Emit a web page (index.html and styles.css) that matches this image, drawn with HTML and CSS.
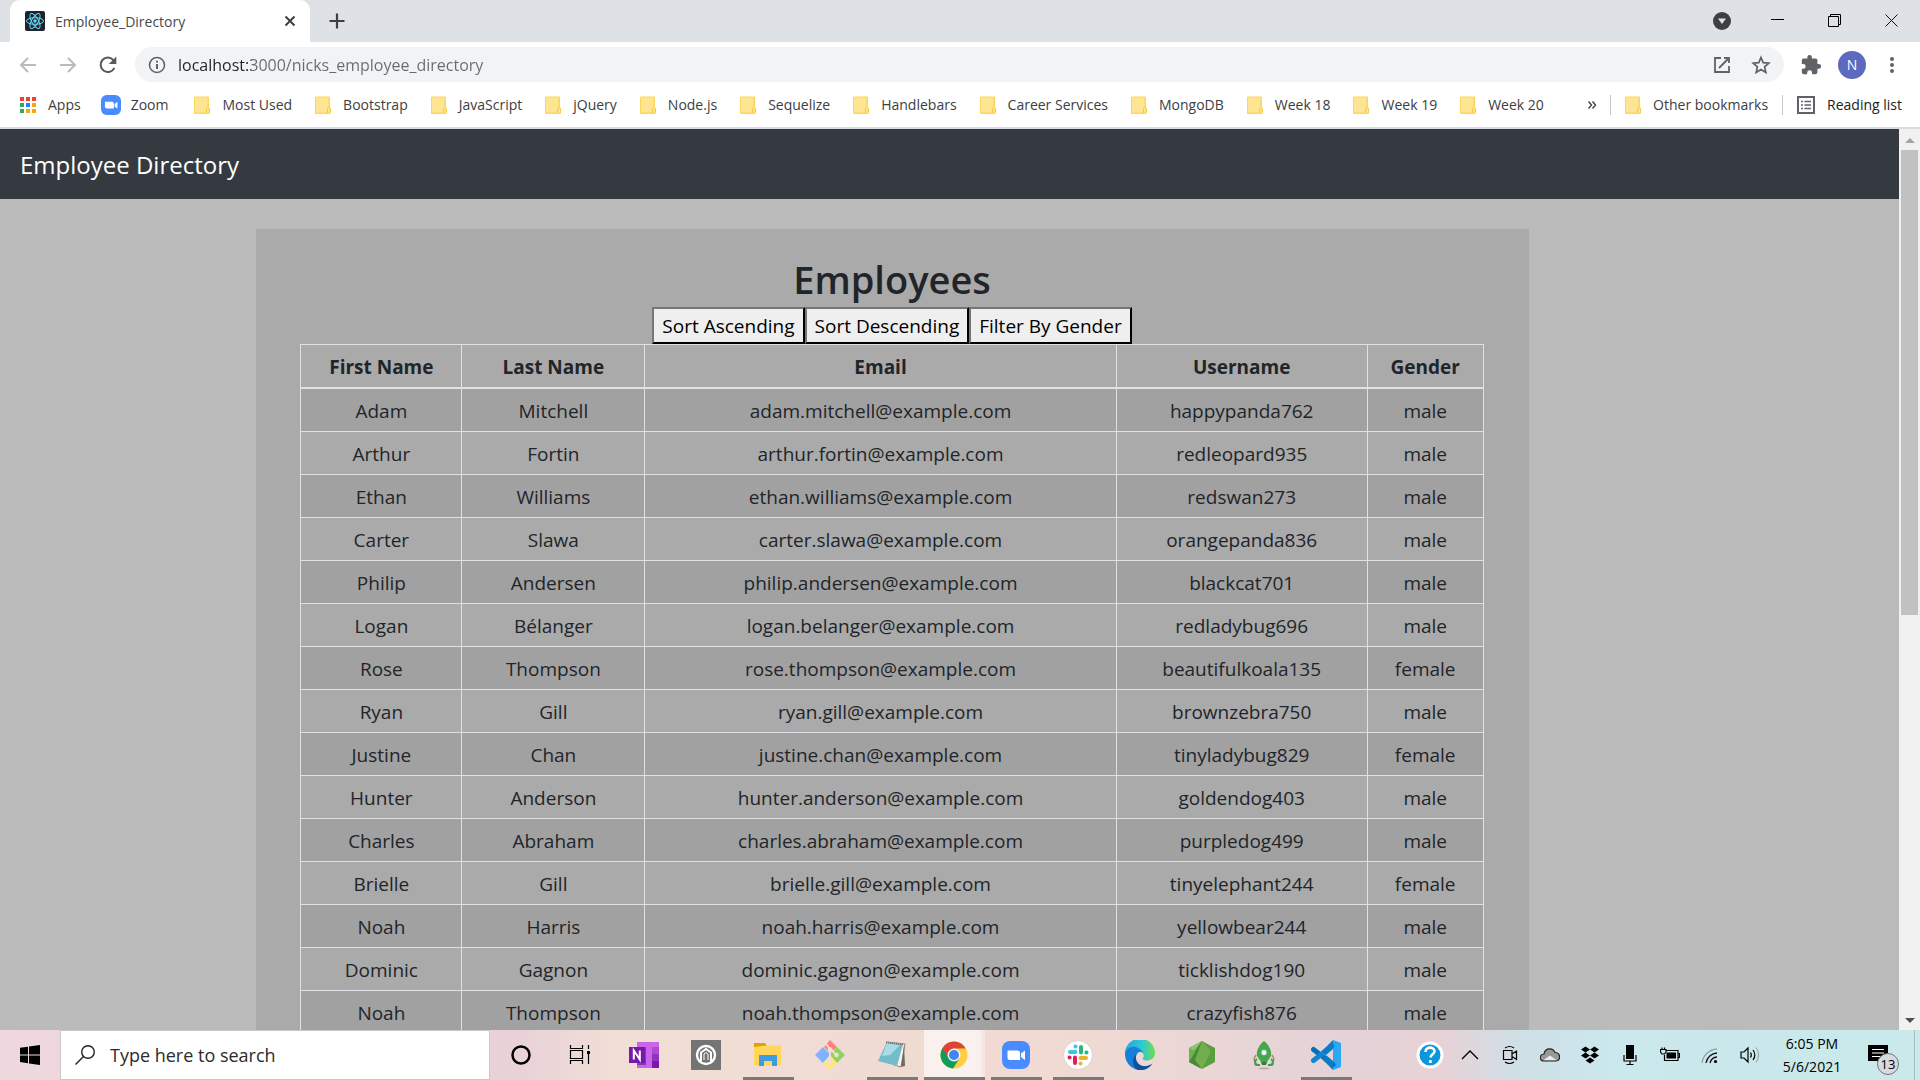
FILE: index.html
```html
<!DOCTYPE html>
<html lang="en">
<head>
<meta charset="utf-8">
<title>Employee_Directory</title>
<link rel="stylesheet" href="styles.css">
</head>
<body>
<svg class="sprite" aria-hidden="true">
  <symbol id="folder" viewBox="0 0 16 18">
    <path d="M1 .5h13a1 1 0 0 1 1 1V12l1 1v4l-1 1H1a1 1 0 0 1-1-1V1.500a1 1 0 0 1 1-1z" fill="#fbd75b"/>
    <path d="M1 1.500h12.500v15H1z" fill="#ffe591"/>
    <path d="M12.500 17v-4.500l1-1h1l1 1.500v3.500" fill="#ffe591" stroke="#f3c93c"/>
  </symbol>
  <symbol id="zoom-logo" viewBox="0 0 28 28">
    <rect width="28" height="28" rx="8" fill="#4a8cff"/>
    <path d="M5.500 9.500h10a2.500 2.500 0 0 1 2.500 2.500v7H8a2.500 2.500 0 0 1-2.500-2.500zM19 12.500l4-3v9.500l-4-3z" fill="#fff"/>
  </symbol>
</svg>

<header class="browser">
  <div class="tabstrip">
    <div class="tab">
      <svg class="favicon" viewBox="0 0 20 20" width="20" height="20"><rect width="20" height="20" rx="2" fill="#20232a"/><g fill="none" stroke="#61dafb"><ellipse cx="10" cy="10" rx="8.500" ry="3.300"/><ellipse cx="10" cy="10" rx="8.500" ry="3.300" transform="rotate(60 10 10)"/><ellipse cx="10" cy="10" rx="8.500" ry="3.300" transform="rotate(120 10 10)"/></g><circle cx="10" cy="10" r="1.700" fill="#61dafb"/></svg>
      <span class="tab-title">Employee_Directory</span>
      <button class="icon-btn" aria-label="Close tab"><svg viewBox="0 0 20 20" width="20" height="20"><path d="M5.500 5.500l9 9m0-9l-9 9" stroke="#3c4043" stroke-width="2"/></svg></button>
    </div>
    <button class="icon-btn new-tab" aria-label="New tab"><svg viewBox="0 0 20 20" width="20" height="20"><path d="M10 2.500v15M2.500 10h15" stroke="#3c4043" stroke-width="2.200"/></svg></button>
    <div class="window-controls">
      <button class="icon-btn search-tabs" aria-label="Search tabs"><svg viewBox="0 0 20 20" width="20" height="20"><circle cx="10" cy="10" r="9" fill="#3c4043"/><path d="M6 7.500h8L10 13z" fill="#dee1e6"/></svg></button>
      <button class="icon-btn win-btn" aria-label="Minimize"><svg viewBox="0 0 14 14" width="14" height="14"><path d="M0 5.500h13" stroke="#000"/></svg></button>
      <button class="icon-btn win-btn" aria-label="Restore"><svg viewBox="0 0 14 14" width="14" height="14"><path d="M.5 2.500h10v10H.5zM2.500 2V.5h10v10H11" fill="none" stroke="#000"/></svg></button>
      <button class="icon-btn win-btn" aria-label="Close"><svg viewBox="0 0 14 14" width="14" height="14"><path d="M.5.5l12 12m0-12l-12 12" stroke="#111"/></svg></button>
    </div>
  </div>

  <div class="toolbar">
    <button class="icon-btn nav-btn" aria-label="Back"><svg viewBox="0 0 20 20" width="20" height="20"><path d="M18 10H3m7-7l-7 7 7 7" fill="none" stroke="#bababd" stroke-width="2"/></svg></button>
    <button class="icon-btn nav-btn" aria-label="Forward"><svg viewBox="0 0 20 20" width="20" height="20"><path d="M2 10h15m-7-7l7 7-7 7" fill="none" stroke="#bababd" stroke-width="2"/></svg></button>
    <button class="icon-btn nav-btn" aria-label="Reload"><svg viewBox="0 0 20 20" width="20" height="20"><path d="M16.400 12.800A7.200 7.200 0 1 1 15.600 5.400" fill="none" stroke="#55595e" stroke-width="2"/><path d="M18.300 1.500v7.500h-7.500z" fill="#55595e"/></svg></button>
    <div class="omnibox">
      <svg viewBox="0 0 18 18" width="18" height="18"><circle cx="9" cy="9" r="7.500" fill="none" stroke="#5f6368" stroke-width="1.600"/><path d="M9 8v5M9 4.800v1.800" stroke="#5f6368" stroke-width="2"/></svg>
      <input class="url" type="text" aria-label="Address" value="localhost:3000/nicks_employee_directory">
      <button class="icon-btn" aria-label="Open in new window"><svg viewBox="0 0 18 18" width="18" height="18"><path d="M8 2H2v14h14v-6M11 2h5v5M16 2L6 12" fill="none" stroke="#5f6368" stroke-width="1.800"/></svg></button>
      <button class="icon-btn" aria-label="Bookmark this page"><svg viewBox="0 0 20 20" width="20" height="20"><path d="M10 2.500l2.200 5.200 5.600.5-4.200 3.700 1.200 5.500L10 14.500l-4.800 2.900 1.200-5.500-4.200-3.700 5.600-.5z" fill="none" stroke="#5f6368" stroke-width="1.700"/></svg></button>
    </div>
    <div class="toolbar-end">
      <button class="icon-btn" aria-label="Extensions"><svg viewBox="0 0 24 24" width="22" height="22"><path d="M20.500 11H19V7c0-1.100-.9-2-2-2h-4V3.500a2.500 2.500 0 0 0-5 0V5H4c-1.100 0-2 .9-2 2v3.800h1.500a2.700 2.700 0 0 1 0 5.400H2V20c0 1.100.9 2 2 2h3.800v-1.500a2.700 2.700 0 0 1 5.400 0V22H17c1.100 0 2-.9 2-2v-4h1.500a2.500 2.500 0 0 0 0-5z" fill="#5f6368"/></svg></button>
      <button class="avatar" aria-label="Profile">N</button>
      <button class="icon-btn" aria-label="Menu"><svg viewBox="0 0 20 20" width="20" height="20"><g fill="#5f6368"><circle cx="10" cy="4" r="2"/><circle cx="10" cy="10" r="2"/><circle cx="10" cy="16" r="2"/></g></svg></button>
    </div>
  </div>

  <nav class="bookmarks" aria-label="Bookmarks">
    <a class="bookmark tight" href="#"><svg viewBox="0 0 16 16" width="16" height="16"><path d="M0 0h4v4H0zM6 0h4v4H6zM12 0h4v4h-4z" fill="#ea4335"/><path d="M0 6h4v4H0zM0 12h4v4H0z" fill="#34a853"/><path d="M6 6h4v4H6z" fill="#1a86f0"/><path d="M12 6h4v4h-4zM6 12h4v4H6zM12 12h4v4h-4z" fill="#fba50a"/></svg>Apps</a>
    <a class="bookmark zoom-link" href="#"><svg width="20" height="20"><use href="#zoom-logo"/></svg>Zoom</a>
    <a class="bookmark" href="#"><svg width="16" height="18"><use href="#folder"/></svg>Most Used</a>
    <a class="bookmark" href="#"><svg width="16" height="18"><use href="#folder"/></svg>Bootstrap</a>
    <a class="bookmark" href="#"><svg width="16" height="18"><use href="#folder"/></svg>JavaScript</a>
    <a class="bookmark" href="#"><svg width="16" height="18"><use href="#folder"/></svg>jQuery</a>
    <a class="bookmark" href="#"><svg width="16" height="18"><use href="#folder"/></svg>Node.js</a>
    <a class="bookmark" href="#"><svg width="16" height="18"><use href="#folder"/></svg>Sequelize</a>
    <a class="bookmark" href="#"><svg width="16" height="18"><use href="#folder"/></svg>Handlebars</a>
    <a class="bookmark" href="#"><svg width="16" height="18"><use href="#folder"/></svg>Career Services</a>
    <a class="bookmark" href="#"><svg width="16" height="18"><use href="#folder"/></svg>MongoDB</a>
    <a class="bookmark" href="#"><svg width="16" height="18"><use href="#folder"/></svg>Week 18</a>
    <a class="bookmark" href="#"><svg width="16" height="18"><use href="#folder"/></svg>Week 19</a>
    <a class="bookmark" href="#"><svg width="16" height="18"><use href="#folder"/></svg>Week 20</a>
    <div class="bookmarks-end">
      <button class="icon-btn" aria-label="More bookmarks"><svg viewBox="0 0 8 8" width="8" height="8"><path d="M.5.500L3.500 4l-3 3.500M4.500.500L7.500 4l-3 3.500" fill="none" stroke="#3c4043" stroke-width="1.400"/></svg></button>
      <span class="divider"></span>
      <a class="bookmark" href="#"><svg width="16" height="18"><use href="#folder"/></svg>Other bookmarks</a>
      <span class="divider"></span>
      <button class="reading"><svg viewBox="0 0 18 18" width="18" height="18"><path d="M1 1h16v16H1z" fill="none" stroke="#5f6368" stroke-width="2"/><path d="M4 5.500h2M7.500 5.500H14M4 9h2M7.500 9H14M4 12.500h2M7.500 12.500H14" stroke="#5f6368" stroke-width="1.600"/></svg>Reading list</button>
    </div>
  </nav>
</header>

<div class="viewport">
  <div class="page">
    <nav class="navbar"><a href="#">Employee Directory</a></nav>
    <main class="card">
      <h1>Employees</h1>
      <div class="actions"><button>Sort Ascending</button><button>Sort Descending</button><button>Filter By Gender</button></div>
      <table>
        <colgroup><col class="c-first"><col class="c-last"><col class="c-email"><col class="c-user"><col class="c-gender"></colgroup>
        <thead><tr><th>First Name</th><th>Last Name</th><th>Email</th><th>Username</th><th>Gender</th></tr></thead>
        <tbody>
          <tr><td>Adam</td><td>Mitchell</td><td>adam.mitchell@example.com</td><td>happypanda762</td><td>male</td></tr>
          <tr><td>Arthur</td><td>Fortin</td><td>arthur.fortin@example.com</td><td>redleopard935</td><td>male</td></tr>
          <tr><td>Ethan</td><td>Williams</td><td>ethan.williams@example.com</td><td>redswan273</td><td>male</td></tr>
          <tr><td>Carter</td><td>Slawa</td><td>carter.slawa@example.com</td><td>orangepanda836</td><td>male</td></tr>
          <tr><td>Philip</td><td>Andersen</td><td>philip.andersen@example.com</td><td>blackcat701</td><td>male</td></tr>
          <tr><td>Logan</td><td>Bélanger</td><td>logan.belanger@example.com</td><td>redladybug696</td><td>male</td></tr>
          <tr><td>Rose</td><td>Thompson</td><td>rose.thompson@example.com</td><td>beautifulkoala135</td><td>female</td></tr>
          <tr><td>Ryan</td><td>Gill</td><td>ryan.gill@example.com</td><td>brownzebra750</td><td>male</td></tr>
          <tr><td>Justine</td><td>Chan</td><td>justine.chan@example.com</td><td>tinyladybug829</td><td>female</td></tr>
          <tr><td>Hunter</td><td>Anderson</td><td>hunter.anderson@example.com</td><td>goldendog403</td><td>male</td></tr>
          <tr><td>Charles</td><td>Abraham</td><td>charles.abraham@example.com</td><td>purpledog499</td><td>male</td></tr>
          <tr><td>Brielle</td><td>Gill</td><td>brielle.gill@example.com</td><td>tinyelephant244</td><td>female</td></tr>
          <tr><td>Noah</td><td>Harris</td><td>noah.harris@example.com</td><td>yellowbear244</td><td>male</td></tr>
          <tr><td>Dominic</td><td>Gagnon</td><td>dominic.gagnon@example.com</td><td>ticklishdog190</td><td>male</td></tr>
          <tr><td>Noah</td><td>Thompson</td><td>noah.thompson@example.com</td><td>crazyfish876</td><td>male</td></tr>
        </tbody>
      </table>
    </main>
  </div>
  <div class="scrollbar" aria-hidden="true">
    <svg viewBox="0 0 10 5" width="10" height="5"><path d="M0 5l5-5 5 5z" fill="#a3a3a3"/></svg>
    <div class="track"><div class="thumb"></div></div>
    <svg viewBox="0 0 10 5" width="10" height="5"><path d="M0 0l5 5 5-5z" fill="#505050"/></svg>
  </div>
</div>

<footer class="taskbar">
  <button class="start" aria-label="Start"><svg viewBox="0 0 20 20" width="20" height="20"><path d="M0 2.800L8 1.700V9.400H0zM9 1.500L20 0v9.400H9zM0 10.400h8v7.800l-8-1.100zM9 10.400h11V20L9 18.400z"/></svg></button>
  <label class="search"><svg viewBox="0 0 20 20" width="20" height="20"><circle cx="13" cy="7" r="6.300" fill="none" stroke="#222" stroke-width="1.400"/><path d="M8.500 11.500L.5 19.500" stroke="#222" stroke-width="1.400"/></svg><input type="text" placeholder="Type here to search" aria-label="Type here to search"></label>
  <div class="apps">
    <button class="app system" aria-label="Cortana"><svg viewBox="0 0 30 30" width="30" height="30"><circle cx="15" cy="15" r="8.500" fill="none" stroke="#000" stroke-width="2.500"/></svg></button>
    <button class="app" aria-label="Task view"><svg viewBox="0 0 30 30" width="30" height="30"><path d="M3.500 5v3.500h12V5M3.500 24v-3.500h12V24M3.500 10.500h12v8h-12zM21.500 5v4M21.500 14v10" fill="none" stroke="#000" stroke-width="1.200"/><path d="M20 11h3v3h-3z"/></svg></button>
    <button class="app" aria-label="OneNote"><svg viewBox="0 0 30 30" width="30" height="30"><path d="M8 2h22v26H8z" fill="#ca64ea"/><path d="M23 7h7v7h-7z" fill="#ae4bd5"/><path d="M23 14h7v7h-7z" fill="#9332bf"/><path d="M23 21h7v7h-7z" fill="#7719aa"/><path d="M8 7h9v18H8z" fill="#8a35b4"/><path d="M0 7h16v16H0z" fill="#7719aa"/><path d="M4.800 19.500v-9l6 9v-9" fill="none" stroke="#fff" stroke-width="2"/></svg></button>
    <button class="app" aria-label="Headphones app"><svg viewBox="0 0 30 30" width="30" height="30"><path d="M0 0h30v30H0z" fill="#747474"/><circle cx="15" cy="15" r="9" fill="#747474" stroke="#fff" stroke-width="2.400"/><path d="M10 21v-8.500l5-3.500 5 3.500V21" fill="none" stroke="#fff" stroke-width="2"/><path d="M13 20v-6l2-1.500 2 1.500v6" fill="none" stroke="#fff"/></svg></button>
    <button class="app open" aria-label="File Explorer"><svg viewBox="0 0 30 30" width="30" height="30"><path d="M1 3h11l2 3v3H1z" fill="#e0a000"/><path d="M1 7l13-1.500h14V25H1z" fill="#ffd55c"/><path d="M6 15h18v11h-5v-5h-8v5H6z" fill="#3d9be0"/></svg></button>
    <button class="app" aria-label="Git"><svg viewBox="0 0 30 30" width="30" height="30"><path d="M15 0l7 7-7 6-6-6z" fill="#ff8080"/><path d="M22 7l8 8-8 8-8-8z" fill="#8fd45f"/><path d="M8 7l8 8-8 8-8-8z" fill="#80b3ff"/><path d="M15 15l7 8-7 7-7-7z" fill="#ffe680"/><path d="M11 4l4 5v11M15.500 9l6 6" fill="none" stroke="#f2ded4" stroke-width="1.800"/><g fill="#f2ded4"><circle cx="15" cy="9.500" r="2.300"/><circle cx="21.500" cy="15" r="2.300"/><circle cx="15" cy="21" r="2.300"/></g></svg></button>
    <button class="app open" aria-label="Notepad"><svg viewBox="0 0 30 30" width="30" height="30"><path d="M10 2l18 2-4 23-7-2z" fill="#f6f3e8" stroke="#8a8a7a"/><path d="M27 5l1 21-4 1z" fill="#6e6b60"/><path d="M10 2l16 2-6 22L1 21z" fill="#74bccb"/><path d="M10 3l13 2-10 10-8 1z" fill="#a9dce4"/><path d="M9 2.500l17 2" stroke="#6c767a" stroke-width="2" stroke-dasharray="1 1"/></svg></button>
    <button class="app open active" aria-label="Google Chrome"><svg viewBox="0 0 30 30" width="30" height="30"><circle cx="15" cy="15" r="13.500" fill="#ffcd40"/><path d="M3.300 8.200A13.500 13.500 0 0 0 14 28.500l6.500-10.300L15 15z" fill="#0f9d58"/><path d="M3.300 8.200L9.500 18 15 8.500h11.700A13.500 13.500 0 0 0 3.300 8.200z" fill="#db4437"/><circle cx="15" cy="15" r="6.500" fill="#f4f4f4"/><circle cx="15" cy="15" r="5" fill="#4285f4"/></svg></button>
    <button class="app open" aria-label="Zoom"><svg width="28" height="28"><use href="#zoom-logo"/></svg></button>
    <button class="app open" aria-label="Slack"><svg viewBox="0 0 30 30" width="30" height="30"><circle cx="15" cy="15" r="14.500" fill="#fff" stroke="#ddd3cf"/><g fill="none" stroke-width="4" stroke-linecap="round"><path d="M7 12h5.500M12.500 6.500v.1" stroke="#36c5f0"/><path d="M18 7v5.500M23.500 12.500h-.1" stroke="#2eb67d"/><path d="M23 18h-5.500M17.500 23.500v-.1" stroke="#ecb22e"/><path d="M12 23v-5.500M6.500 17.500h.1" stroke="#e01e5a"/></g></svg></button>
    <button class="app" aria-label="Microsoft Edge"><svg viewBox="0 0 30 30" width="30" height="30"><defs><linearGradient id="edge-top" x2="1"><stop offset="0" stop-color="#2aa5e0"/><stop offset=".55" stop-color="#2fc6d8"/><stop offset="1" stop-color="#6be04d"/></linearGradient></defs><path d="M0 14A15 15 0 0 1 30 13c0 5-4 7.500-8 7.500-3 0-5-1-4-2.500 1.500-2 1-6-3.500-6z" fill="url(#edge-top)"/><path d="M0 14c1-6 8-9 13-6 4 2 5 4 5 4-7-2-9 6-5 11 3 4 9 4 14 1-5 7-13 7.500-18 4.500C4 26 0 21 0 14z" fill="#1580d8"/><path d="M12.500 13c-4 5-1 12 5.500 13 4 .500 7-.5 9.500-2.500C24 29 18 31 13 29.700 7 27 6 18 12.500 13z" fill="#0f519f"/></svg></button>
    <button class="app" aria-label="MongoDB Compass"><svg viewBox="0 0 30 30" width="30" height="30"><path d="M15 1l13 7v14l-13 7-13-7V8z" fill="#5a9e42"/><path d="M15 1L2 8l5 3z" fill="#8cc66a"/><path d="M2 8l7 4L2 22z" fill="#6fb04f"/><path d="M2 22L15 1l-2 27z" fill="#468b38"/><path d="M15 1L8 20l7 9 9-18z" fill="#73ad4d"/></svg></button>
    <button class="app" aria-label="Rocket"><svg viewBox="0 0 30 30" width="30" height="30"><ellipse cx="15" cy="28.500" rx="5.500" ry="1" fill="#c3aca8"/><path d="M7 15c-3 4-2 7 1 9M23 15c3 4 2 7-1 9" fill="none" stroke="#a98d60" stroke-width="1.500"/><path d="M8 19c-3 2-2 5-1 6h4M22 19c3 2 2 5 1 6h-4" fill="none" stroke="#3fa24a" stroke-width="2"/><path d="M15 1c5 4 8 10 7 15l-4 6h-6l-4-6C7 11 10 5 15 1z" fill="#43a84c"/><path d="M12 22h6l-1 3h-4z" fill="#2f7f3a"/><circle cx="15" cy="12.500" r="3" fill="#eafaf0" stroke="#6aa58c"/></svg></button>
    <button class="app open" aria-label="Visual Studio Code"><svg viewBox="0 0 30 30" width="30" height="30"><path d="M22 0l8 3v24l-8 3z" fill="#2aa8f2"/><path d="M2.500 9.500L22 24.500" stroke="#0070bd" stroke-width="5" stroke-linecap="round"/><path d="M2.500 20.500L21 6" stroke="#1285cf" stroke-width="5" stroke-linecap="round"/><path d="M22 0v9l-7 6-4-4zM22 30v-9l-7-6-4 4z" fill="#0c7cc6"/></svg></button>
  </div>
  <div class="tray">
    <button class="tray-icon help" aria-label="Help"><svg viewBox="0 0 28 28" width="28" height="28"><circle cx="14" cy="14" r="12" fill="#0c96dc" stroke="#fff" stroke-width="3"/><path d="M9.500 11c0-6 9-5.500 9-.8 0 3-4 3-4 6.300M14.400 19v3" fill="none" stroke="#fff" stroke-width="2.600"/></svg></button>
    <button class="tray-icon" aria-label="Show hidden icons"><svg viewBox="0 0 20 20" width="20" height="20"><path d="M2 14l8-8 8 8" fill="none" stroke="#000" stroke-width="1.300"/></svg></button>
    <button class="tray-icon" aria-label="Meet now"><svg viewBox="0 0 20 20" width="20" height="20"><path d="M3.500 5.500h8.500v9H3.500zM12 9l4.500-3v8.500L12 11.500M5 3c3-2 6-2 9 0M5 17c3 2 6 2 9 0" fill="none" stroke="#000" stroke-width="1.200"/></svg></button>
    <button class="tray-icon" aria-label="OneDrive"><svg viewBox="0 0 20 20" width="20" height="20"><path d="M4 16c-5 0-5-6.500 0-7C5 3 12.500 2 15 7.500c6 .500 6 8 1 8.500z" fill="#999"/><path d="M3 15.500l7-5 7 5z" fill="#e6eef0"/><path d="M4 16c-5 0-5-6.500 0-7C5 3 12.500 2 15 7.500c6 .500 6 8 1 8.500z" fill="none" stroke="#222" stroke-width="1.200"/></svg></button>
    <button class="tray-icon" aria-label="Dropbox"><svg viewBox="0 0 20 20" width="20" height="20"><path d="M5.500 1.500L10 4.500 5.500 7.500 1 4.500zM14.500 1.500L19 4.500l-4.500 3-4.500-3zM5.500 7.500l4.500 3-4.500 3-4.500-3zM14.500 7.500l4.500 3-4.500 3-4.500-3zM10 12.500l4.500 3-4.500 3-4.500-3z"/></svg></button>
    <button class="tray-icon" aria-label="Microphone"><svg viewBox="0 0 20 20" width="20" height="20"><path d="M6 0h8v14H6z"/><path d="M4 10v6h12v-6M10 16v3.500M6.500 19.500h7" fill="none" stroke="#000" stroke-width="1.200"/></svg></button>
    <button class="tray-icon" aria-label="Battery charging"><svg viewBox="0 0 20 20" width="20" height="20"><path d="M6.500 5.500H18v10H4.500V10M18.500 8.500h1v4h-1M.5 4.500h5.500V7L4.500 9H2L.5 7zM2 2.500v2M4.500 2.500v2" fill="none" stroke="#000" stroke-width="1.200"/><path d="M6.500 7.500H16v6H6.500z"/></svg></button>
    <button class="tray-icon" aria-label="Wi-Fi"><svg viewBox="0 0 20 20" width="20" height="20"><g fill="none" stroke-width="1.300"><path d="M2 18A16 16 0 0 1 17 4" stroke="#8fa4a6"/><path d="M6 18A12 12 0 0 1 17 8M10 18a8 8 0 0 1 7-6" stroke="#111"/></g><circle cx="15.500" cy="16.500" r="1.600"/></svg></button>
    <button class="tray-icon" aria-label="Volume"><svg viewBox="0 0 20 20" width="20" height="20"><g fill="none" stroke-width="1.200"><path d="M1 7h3l4-4v14l-4-4H1zM10.500 7.500c1 1.500 1 3.500 0 5M13 5c2.200 3 2.200 7 0 10" stroke="#000"/><path d="M16 2.500c3.500 4.500 3.500 10.500 0 15" stroke="#9aabad"/></g></svg></button>
    <div class="clock"><span>6:05 PM</span><span>5/6/2021</span></div>
    <button class="tray-icon notices" aria-label="13 notifications"><svg viewBox="0 0 20 20" width="20" height="20"><path d="M0 0h20v16h-7v4l-4-4H0z"/><path d="M4 4.500h12M4 8h12M4 11.500h8" stroke="#fff" stroke-width="1.200"/></svg><span class="badge">13</span></button>
  </div>
</footer>
</body>
</html>
```
FILE: styles.css
```css
* { box-sizing: border-box; }

body {
  margin: 0;
  height: 100vh;
  display: flex;
  flex-direction: column;
  overflow: hidden;
  font-family: "Open Sans", "Noto Sans", sans-serif;
  color: #212529;
}

a { color: inherit; text-decoration: none; }
button, input { font: inherit; color: inherit; }
svg { display: block; flex: none; }
.sprite { display: none; }

.icon-btn {
  display: flex;
  padding: 0;
  border: 0;
  background: none;
}

/* Browser frame */
.browser {
  flex: none;
  background: #fff;
  border-bottom: 2px solid #dadce0;
}

.tabstrip {
  display: flex;
  align-items: center;
  height: 42px;
  padding-left: 10px;
  background: #dee1e6;
}

.tab {
  display: flex;
  align-items: center;
  gap: 10px;
  width: 300px;
  height: 42px;
  padding: 0 10px 0 15px;
  border-radius: 10px 10px 0 0;
  background: #fff;
}

.tab-title { flex: 1; font-size: 14px; color: #45494d; }
.new-tab { margin-left: 17px; }

.window-controls { display: flex; align-items: center; margin-left: auto; }
.search-tabs { margin-right: 17px; }
.win-btn { width: 57px; height: 36px; align-items: center; justify-content: center; }

.toolbar {
  display: flex;
  align-items: center;
  gap: 20px;
  height: 45px;
  padding: 0 18px;
}

.nav-btn:nth-child(3) { margin-right: -3px; }

.toolbar-end {
  display: flex;
  align-items: center;
  gap: 16px;
  margin-left: -4px;
}

.omnibox {
  flex: 1;
  display: flex;
  align-items: center;
  gap: 20px;
  height: 35px;
  padding: 0 13px;
  border-radius: 18px;
  background: #f1f3f4;
}

.url {
  flex: 1;
  margin-left: -8px;
  padding: 0;
  border: 0;
  font-size: 16px;
  color: transparent;
  background: linear-gradient(to right, #202124 74px, #676b70 74px);
  background-clip: text;
  -webkit-background-clip: text;
}

.avatar {
  width: 28px;
  height: 28px;
  padding: 0;
  border: 0;
  border-radius: 50%;
  background: #5c6bc0;
  color: #fff;
  font-size: 14px;
}

.bookmarks {
  display: flex;
  align-items: center;
  gap: 23px;
  height: 40px;
  padding: 0 18px 5px 20px;
  font-size: 14px;
  color: #3c4043;
  white-space: nowrap;
}

.bookmark { display: flex; align-items: center; gap: 12px; }
.bookmark.tight { margin-right: -3px; }
.bookmark.zoom-link { gap: 10px; margin-right: 3px; }

.bookmarks-end {
  display: flex;
  align-items: center;
  gap: 14px;
  margin-left: auto;
}

.divider { width: 1px; height: 20px; background: #c4c7ca; }

.reading {
  display: flex;
  align-items: center;
  gap: 12px;
  padding: 0;
  border: 0;
  background: none;
  color: #202124;
}

/* Web page */
.viewport {
  flex: 1;
  display: flex;
  min-height: 0;
}

.page {
  flex: 1;
  overflow: hidden;
  background: #bbb;
}

.navbar {
  display: flex;
  align-items: center;
  height: 70px;
  padding: 0 20px;
  background: #343a40;
  color: #fff;
  font-size: 24px;
}

.card {
  width: 67%;
  margin: 30px 0 0 13.5%;
  padding: 26px 45px 30px 44px;
  background: #aaa;
  text-align: center;
}

h1 {
  margin: 0 0 4px;
  font-size: 38px;
  font-weight: 600;
  line-height: 48px;
}

.actions { display: flex; justify-content: center; }

.actions button {
  height: 37px;
  padding: 0 8px;
  border: 2px outset #767676;
  border-color: #767676 #222 #222 #767676;
  background: #efefef;
  color: #000;
  font-size: 19px;
  line-height: 30px;
}

table {
  width: 100%;
  table-layout: fixed;
  border-collapse: collapse;
  font-size: 19px;
  line-height: 30px;
}

.c-first { width: 161px; }
.c-last { width: 183px; }
.c-user { width: 251px; }
.c-gender { width: 116px; }

th, td { padding: 7px 6px 5px; border: 1px solid #dee2e6; }
th { border-bottom-width: 2px; font-weight: 700; }
tbody tr:nth-child(odd) { background: #a1a1a1; }

.scrollbar {
  display: flex;
  flex-direction: column;
  align-items: center;
  gap: 7px;
  width: 21px;
  padding: 9px 0 7px;
  background: #f1f1f1;
}

.track { flex: 1; width: 17px; }
.thumb { height: 54%; background: #c1c1c1; }

/* Taskbar */
.taskbar {
  flex: none;
  display: flex;
  align-items: center;
  height: 50px;
  background: linear-gradient(to right, #efd7df 0, #e8d2d8 27%, #f1ded5 32%, #f0dad3 55%, #e4d2d8 71%, #e8d2d6 75%, #cfdfe6 79%, #cbe8ec 84%, #c9e9ea 100%);
}

.start {
  display: flex;
  justify-content: center;
  width: 60px;
  padding: 0;
  border: 0;
  background: none;
}

.search {
  display: flex;
  align-items: center;
  gap: 15px;
  width: 430px;
  height: 50px;
  padding: 0 14px;
  border: 1px solid #c8c8c8;
  background: #fff;
}

.search input {
  flex: 1;
  min-width: 0;
  padding: 0;
  border: 0;
  background: none;
  font-size: 18px;
}

.search input::placeholder { color: #2b2b2b; opacity: 1; }

.apps { display: flex; align-self: stretch; }

.app {
  position: relative;
  display: flex;
  align-items: center;
  justify-content: center;
  width: 62px;
  padding: 0;
  border: 0;
  background: none;
}

.app.system { width: 61px; }

.app.open::after {
  content: "";
  position: absolute;
  bottom: 0;
  left: 6px;
  right: 5px;
  height: 3px;
  background: #777a77;
}

.app.active { background: linear-gradient(to right, transparent 1px, #faf1ee 1px, #faf1ee 58px, #f6e7e2 58px); }
.app.active::after { left: 1px; right: 0; }

.tray {
  display: flex;
  align-items: center;
  align-self: stretch;
  margin-left: auto;
  padding-right: 5px;
}

.tray-icon {
  display: flex;
  justify-content: center;
  width: 40px;
  padding: 0;
  border: 0;
  background: none;
}

.clock {
  display: flex;
  flex-direction: column;
  align-items: center;
  width: 84px;
  font-size: 14px;
  line-height: 23px;
  color: #000;
}

.notices {
  position: relative;
  width: 61px;
  align-self: stretch;
  align-items: center;
  padding-right: 12px;
  border-right: 1px solid #a4bcbe;
}

.badge {
  position: absolute;
  left: 23px;
  top: 23px;
  width: 22px;
  height: 22px;
  border: 1px solid #777;
  border-radius: 50%;
  background: #d5dcdd;
  color: #000;
  font-size: 13px;
  line-height: 20px;
}
```
